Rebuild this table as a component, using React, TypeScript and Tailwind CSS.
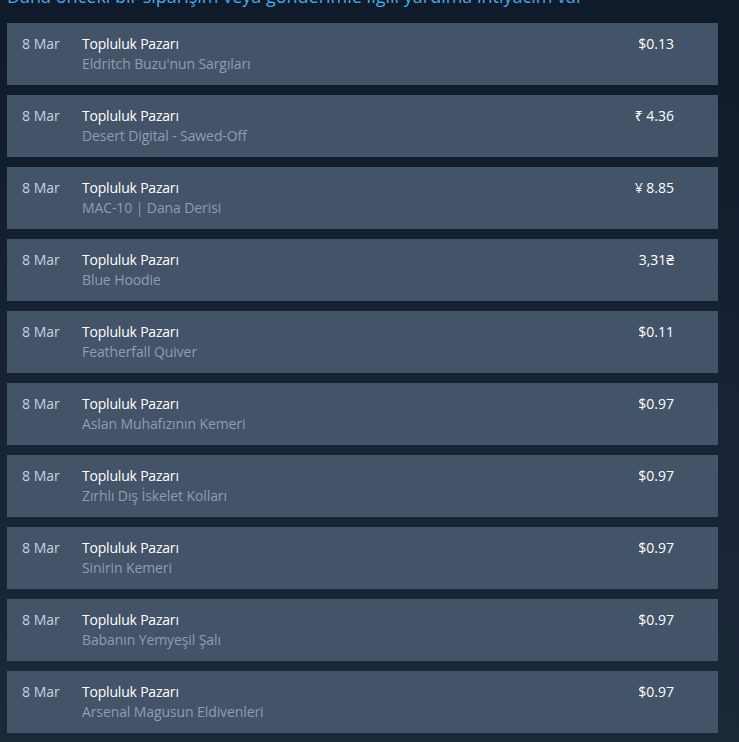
const rows = [
  { item: "Eldritch Buzu'nun Sargıları", price: '$0.13' },
  { item: 'Desert Digital - Sawed-Off', price: '₹ 4.36' },
  { item: 'MAC-10 | Dana Derisi', price: '¥ 8.85' },
  { item: 'Blue Hoodie', price: '3,31₴' },
  { item: 'Featherfall Quiver', price: '$0.11' },
  { item: 'Aslan Muhafızının Kemeri', price: '$0.97' },
  { item: 'Zırhlı Dış İskelet Kolları', price: '$0.97' },
  { item: 'Sinirin Kemeri', price: '$0.97' },
  { item: 'Babanın Yemyeşil Şalı', price: '$0.97' },
  { item: 'Arsenal Magusun Eldivenleri', price: '$0.97' },
]

export default function App() {
  return (
    <div
      className="h-[742px] w-[739px] overflow-hidden bg-gradient-to-b from-[#0f1a2a] via-[#172334] to-[#1b2838] px-[7px]"
      style={{ fontFamily: '"Open Sans", "Noto Sans", sans-serif' }}
    >
      {/* clipped heading */}
      <div className="-mt-[16px] h-[24px] whitespace-nowrap text-[18px] leading-[24px] text-[#4aa8e8]">
        Daha önceki bir siparişim veya gönderimle ilgili yardıma ihtiyacım var
      </div>

      <div className="mt-[15px] flex w-[711px] flex-col gap-[10px]">
        {rows.map((row, i) => (
          <div key={i} className="flex h-[62px] bg-[#435368] pt-[11px] pl-[15px] pr-[44px] text-[14px] leading-[20px]">
            <div className="w-[60px] shrink-0 text-[#c6d4df]">8 Mar</div>
            <div className="flex-1">
              <div className="tracking-[-0.2px] text-white">Topluluk Pazarı</div>
              <div className="tracking-[-0.1px] text-[#8f9eb0]">{row.item}</div>
            </div>
            <div className="text-right text-white">{row.price}</div>
          </div>
        ))}
      </div>
    </div>
  )
}
